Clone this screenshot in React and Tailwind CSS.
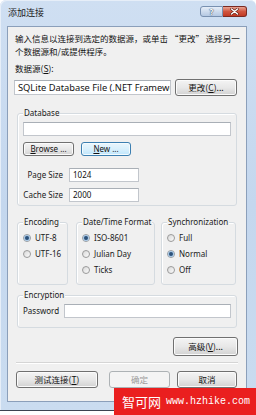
import React from "react";

const F = "font-['Noto_Sans','Noto_Sans_CJK_SC',sans-serif]";
const CJK = "font-['Noto_Sans_CJK_SC','Noto_Sans',sans-serif]";

function Btn({ children, className = "", variant = "normal" }) {
  const base =
    "flex items-center justify-center rounded-[3px] border leading-none whitespace-nowrap " + className;
  if (variant === "focus")
    return (
      <div
        className={
          base +
          " border-[#3c7fb1] bg-linear-to-b from-[#eaf6fd] via-[#d9f0fc] to-[#bee6fd] shadow-[inset_0_0_0_1px_#f4fbfe] text-[#111]"
        }
      >
        {children}
      </div>
    );
  if (variant === "disabled")
    return (
      <div className={base + " border-[#adb2b5] bg-[#f4f4f4] text-[#9a9a9a]"}>
        {children}
      </div>
    );
  return (
    <div
      className={
        base +
        " border-[#707070] bg-linear-to-b from-[#f4f4f4] via-[#e8e8e8] to-[#d2d2d2] shadow-[inset_0_0_0_1px_#fbfbfb] text-[#111]"
      }
    >
      {children}
    </div>
  );
}

function Input({ className = "", children }) {
  return (
    <div
      className={
        "bg-white border border-[#c2c6cc] border-t-[#a9afb6] flex items-center px-[3px] text-[#111] overflow-hidden whitespace-nowrap " +
        className
      }
    >
      {children}
    </div>
  );
}

function Group({ label, className = "", children }) {
  return (
    <div
      className={
        "relative border border-[#d5dbe0] rounded-[3px] shadow-[inset_1px_1px_0_#fff] " +
        className
      }
    >
      <span className="absolute left-[5px] top-[-7px] px-[1px] bg-[#f0f0f0] text-[8px] leading-[12px] text-[#1a1a1a] whitespace-nowrap">
        {label}
      </span>
      {children}
    </div>
  );
}

function Radio({ checked, label }) {
  return (
    <div className="flex items-center h-[16px] gap-[4px]">
      <span className="w-[8px] h-[8px] rounded-full border border-[#9a9a9a] bg-linear-to-br from-[#d8d8d8] to-[#fcfcfc] flex items-center justify-center shrink-0">
        {checked && (
          <span className="w-[4px] h-[4px] rounded-full bg-[#2c5179] shadow-[0_0_1px_1px_#9ec3e6]" />
        )}
      </span>
      <span className="text-[8px] text-[#1a1a1a] leading-none whitespace-nowrap">{label}</span>
    </div>
  );
}

export default function App() {
  return (
    <div className={"relative w-[256px] h-[415px] bg-white overflow-hidden " + F}>
      {/* window */}
      <div className="w-[256px] h-[411px] flex flex-col rounded-t-[6px] border-b border-[#3b4350] bg-linear-to-b from-[#cfdff2] via-[#c4d7ee] to-[#cadcf0] shadow-[inset_1px_1px_0_#e6eef8]">
        {/* title bar */}
        <div className="h-[26px] flex items-start shrink-0">
          <div className={"pl-[8px] pt-[7px] text-[9px] leading-[12px] text-[#1b1b1b] " + CJK}>
            添加连接
          </div>
          <div className="ml-auto mr-[9px] mt-[6px] flex">
            <div className="w-[23px] h-[11px] rounded-l-[3px] border border-[#7890b0] bg-linear-to-b from-[#e6eef8] via-[#cddbed] to-[#b4c8e2] flex items-center justify-center">
              <span className="text-[8px] font-bold leading-none text-white [text-shadow:0_0_1px_#1f3a5c,0_0_1px_#1f3a5c]">?</span>
            </div>
            <div className="w-[24px] h-[11px] rounded-r-[3px] border border-l-0 border-[#7a2a22] bg-linear-to-b from-[#e8a493] via-[#d0553f] to-[#c23a24] flex items-center justify-center">
              <svg width="9" height="7" viewBox="0 0 9 7">
                <path d="M1.5 1 L7.5 6 M7.5 1 L1.5 6" stroke="#5a1a10" strokeWidth="2.6" strokeLinecap="round" />
                <path d="M1.5 1 L7.5 6 M7.5 1 L1.5 6" stroke="#ffffff" strokeWidth="1.5" strokeLinecap="round" />
              </svg>
            </div>
          </div>
        </div>
        {/* client area */}
        <div className="ml-[7px] mr-[9px] h-[376px] shrink-0 border border-[#8b9fba] bg-[#f0f0f0] flex flex-col pl-[6px] pr-[8px]">
          <div className={"mt-[5px] pl-[1px] text-[8.5px] leading-[13px] text-[#111] whitespace-nowrap " + CJK}>
            输入信息以连接到选定的数据源，或单击 “更改” 选择另一
            <br />
            个数据源和/或提供程序。
          </div>
          <div className={"mt-[4px] pl-[1px] text-[8.5px] leading-[12px] text-[#111] " + CJK}>
            数据源(<span className="underline">S</span>):
          </div>
          <div className="mt-[5px] flex items-center gap-[4px]">
            <Input className="w-[157px] h-[15px] bg-[#fbfbfb] text-[9.3px]">
              SQLite Database File (.NET Framework Data Provider for SQLite)
            </Input>
            <Btn className={"w-[62px] h-[17px] text-[8.5px] " + CJK}>
              <span>更改(<span className="underline">C</span>)...</span>
            </Btn>
          </div>

          {/* Database group */}
          <Group label="Database" className="mt-[17px] ml-[3px] mr-[1px] px-[5px] pt-[8px] pb-[3px]">
            <Input className="h-[14px] w-full" />
            <div className="mt-[6px] flex gap-[7px]">
              <Btn className="w-[51px] h-[14px] text-[8px]">
                <span><span className="underline">B</span>rowse ...</span>
              </Btn>
              <Btn variant="focus" className="w-[50px] h-[14px] text-[8px]">
                <span><span className="underline">N</span>ew ...</span>
              </Btn>
            </div>
            <div className="mt-[12px] flex items-center gap-[6px]">
              <span className="w-[40px] text-right text-[8px] text-[#1a1a1a] whitespace-nowrap">Page Size</span>
              <Input className="w-[70px] h-[14px] text-[8px]">1024</Input>
            </div>
            <div className="mt-[6px] flex items-center gap-[6px]">
              <span className="w-[40px] text-right text-[8px] text-[#1a1a1a] whitespace-nowrap">Cache Size</span>
              <Input className="w-[70px] h-[14px] text-[8px]">2000</Input>
            </div>
          </Group>

          {/* three groups */}
          <div className="mt-[16px] ml-[3px] mr-[1px] flex">
            <Group label="Encoding" className="w-[51px] pl-[5px] pt-[7px] pb-[6px]">
              <Radio checked label="UTF-8" />
              <Radio label="UTF-16" />
            </Group>
            <Group label="Date/Time Format" className="ml-[8px] w-[79px] pl-[5px] pt-[7px] pb-[6px]">
              <Radio checked label="ISO-8601" />
              <Radio label="Julian Day" />
              <Radio label="Ticks" />
            </Group>
            <Group label="Synchronization" className="ml-[6px] w-[75px] pl-[5px] pt-[7px] pb-[6px]">
              <Radio label="Full" />
              <Radio checked label="Normal" />
              <Radio label="Off" />
            </Group>
          </div>

          {/* Encryption */}
          <Group label="Encryption" className="mt-[10px] ml-[3px] mr-[1px] pl-[5px] pr-[5px] pt-[8px] pb-[9px]">
            <div className="flex items-center gap-[7px]">
              <span className="text-[8px] text-[#1a1a1a] w-[34px] whitespace-nowrap">Password</span>
              <Input className="flex-1 h-[14px]" />
            </div>
          </Group>

          <div className="mt-[9px] flex justify-end">
            <Btn className={"w-[65px] h-[19px] text-[8.5px] " + CJK}>
              <span>高级(<span className="underline">V</span>)...</span>
            </Btn>
          </div>

          <div className="mt-[6px] ml-[2px] border-t border-[#d5d5d5] border-b border-b-white" />

          <div className="mt-[7px] ml-[2px] flex">
            <Btn className={"w-[82px] h-[17px] text-[8.5px] " + CJK}>
              <span>测试连接(<span className="underline">T</span>)</span>
            </Btn>
            <Btn variant="disabled" className={"ml-[11px] w-[61px] h-[17px] text-[8.5px] " + CJK}>
              确定
            </Btn>
            <Btn className={"ml-[7px] w-[60px] h-[17px] text-[8.5px] " + CJK}>
              取消
            </Btn>
          </div>
        </div>
      </div>

      {/* watermark overlay */}
      <div className="absolute left-[114px] top-[388px] w-[142px] h-[27px] bg-[#ea1f1f] flex items-center pl-[8px] gap-[5px] text-white">
        <span className={"text-[13px] leading-none " + CJK}>智可网</span>
        <span className="text-[10px] leading-none font-['Liberation_Mono',monospace]">www.hzhike.com</span>
      </div>
    </div>
  );
}
